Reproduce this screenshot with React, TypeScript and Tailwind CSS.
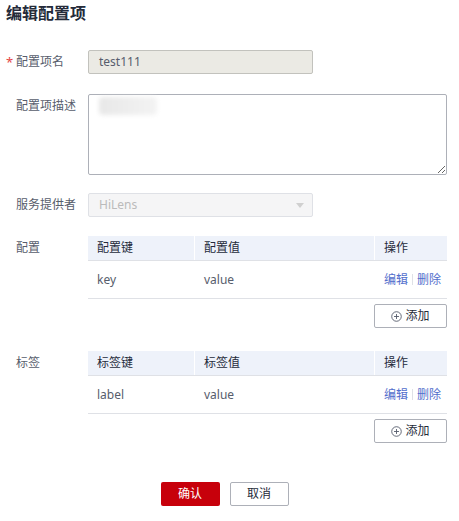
const font = { fontFamily: '"Noto Sans", "Noto Sans CJK SC", sans-serif' };

type Row = { k: string; v: string };

function Label({ text, required }: { text: string; required?: boolean }) {
  return (
    <div className="w-[82px] shrink-0 h-6 flex items-center text-[12px] text-[#575d6c]">
      <span className="w-[10px] text-[#e54545] text-[13px] leading-none">{required ? '*' : ''}</span>
      <span>{text}</span>
    </div>
  );
}

function AddButton() {
  return (
    <div className="flex justify-end mt-[5px]">
      <button className="w-[73px] h-6 border border-[#adb0b8] rounded-[2px] bg-white flex items-center justify-center gap-[3px] text-[12px] text-[#252b3a]">
        <svg width="11" height="11" viewBox="0 0 12 12" fill="none" stroke="#575d6c" strokeWidth="1">
          <circle cx="6" cy="6" r="5.2" />
          <path d="M6 3.3v5.4M3.3 6h5.4" />
        </svg>
        添加
      </button>
    </div>
  );
}

function KvTable({ keyTitle, valTitle, rows }: { keyTitle: string; valTitle: string; rows: Row[] }) {
  return (
    <div className="w-[359px]">
      <div className="flex h-[25px] bg-[#eef2fa] border-b border-[#dfe1e6] text-[12px] text-[#252b3a]">
        <div className="w-[107px] pl-[9px] flex items-center border-r border-white">{keyTitle}</div>
        <div className="w-[180px] pl-[9px] flex items-center border-r border-white">{valTitle}</div>
        <div className="flex-1 pl-[9px] flex items-center">操作</div>
      </div>
      {rows.map(r => (
        <div key={r.k} className="flex h-[38px] border-b border-[#dfe1e6] text-[12px] text-[#575d6c]">
          <div className="w-[107px] pl-[9px] flex items-center">{r.k}</div>
          <div className="w-[180px] pl-[9px] flex items-center">{r.v}</div>
          <div className="flex-1 pl-[9px] flex items-center text-[#526ecc]">
            <span>编辑</span>
            <span className="mx-[4px] h-[11px] w-px bg-[#dfe1e6]"></span>
            <span>删除</span>
          </div>
        </div>
      ))}
      <AddButton />
    </div>
  );
}

export default function App() {
  return (
    <div className="w-[459px] h-[521px] bg-white px-[6px]" style={font}>
      <h1 className="h-[28px] pt-[2px] text-[16px] font-bold leading-[22px] text-[#252b3a]">编辑配置项</h1>

      <div className="flex mt-[22px]">
        <Label text="配置项名" required />
        <div className="w-[225px] h-6 bg-[#ebeae4] border border-[#c2c2bd] rounded-[2px] pl-[10px] flex items-center text-[12px] text-[#575d6c]">
          test111
        </div>
      </div>

      <div className="flex mt-[20px]">
        <Label text="配置项描述" />
        <div className="relative">
          <textarea
            readOnly
            className="block w-[359px] h-[81px] border border-[#adb0b8] rounded-[2px] bg-white outline-none"
          ></textarea>
          {/* blurred description text */}
          <div className="absolute left-[11px] top-[3px] w-[58px] h-[18px] bg-gradient-to-r from-[#e8e8e8] to-[#f3f3f3] blur-[2px] rounded-sm"></div>
        </div>
      </div>

      <div className="flex mt-[18px]">
        <Label text="服务提供者" />
        <div className="w-[225px] h-6 bg-[#f5f5f6] border border-[#dfe1e6] rounded-[2px] pl-[10px] pr-[8px] flex items-center justify-between text-[12px] text-[#bbbbbb]">
          <span>HiLens</span>
          <svg width="8" height="5" viewBox="0 0 8 5"><path d="M0 0h8L4 5z" fill="#d0d0d0" /></svg>
        </div>
      </div>

      <div className="flex mt-[19px]">
        <Label text="配置" />
        <KvTable keyTitle="配置键" valTitle="配置值" rows={[{ k: 'key', v: 'value' }]} />
      </div>

      <div className="flex mt-[23px]">
        <Label text="标签" />
        <KvTable keyTitle="标签键" valTitle="标签值" rows={[{ k: 'label', v: 'value' }]} />
      </div>

      <div className="flex justify-center gap-[10px] mt-[39px] pr-[10px]">
        <button className="w-[59px] h-6 bg-[#c7000b] rounded-[2px] text-white text-[12px]">确认</button>
        <button className="w-[59px] h-6 bg-white border border-[#adb0b8] rounded-[2px] text-[#252b3a] text-[12px]">取消</button>
      </div>
    </div>
  );
}
